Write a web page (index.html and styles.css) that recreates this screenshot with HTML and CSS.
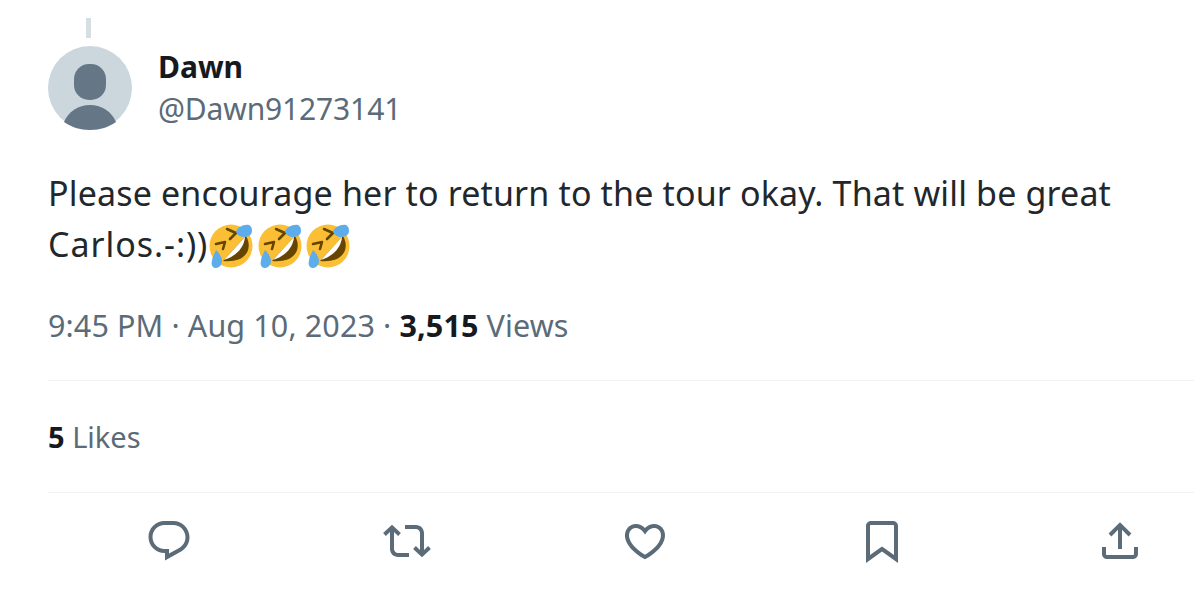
FILE: index.html
```html
<!DOCTYPE html>
<html lang="en">
<head>
  <meta charset="UTF-8">
  <title>Dawn on X</title>
  <link rel="stylesheet" href="styles.css">
</head>
<body>
  <svg class="defs" width="0" height="0">
    <symbol id="rofl" viewBox="0 0 44 44">
      <circle cx="22" cy="22" r="21.5" fill="#fbbf35"/>
      <path d="M37 12 C44 24 38 39 14 37z" fill="#664500"/>
      <path d="M36 13 C35 24 27 32 15 36z" fill="#fff"/>
      <path d="M18 5 L27 9 L21 15" fill="none" stroke="#664500" stroke-width="2.6" stroke-linecap="round" stroke-linejoin="round"/>
      <path d="M7 20 L16 18 L14 25" fill="none" stroke="#664500" stroke-width="2.6" stroke-linecap="round" stroke-linejoin="round"/>
      <path d="M27 8 C28 3 35 0 40 1 C44 3 44 10 40 12 C35 14 29 13 27 8z" fill="#5dadec"/>
      <path d="M7 26 C10 29 13 33 13 37 C13 41 10 44 7 44 C3 44 2 40 3 37 C3 33 6 29 7 26z" fill="#5dadec"/>
    </symbol>
  </svg>

  <div class="thread-line"></div>

  <header class="author">
    <svg class="avatar" viewBox="0 0 84 84">
      <circle cx="42" cy="42" r="42" fill="#ccd6dd"/>
      <rect x="26" y="18" width="32" height="36" rx="15" fill="#657786"/>
      <path d="M16 76 C20 66 30 59 42 59 C54 59 64 66 68 76 C61 81 52 84 42 84 C32 84 23 81 16 76z" fill="#657786"/>
    </svg>
    <div class="names">
      <div class="name">Dawn</div>
      <div class="handle">@Dawn91273141</div>
    </div>
  </header>

  <p class="tweet-text">Please encourage her to return to the tour okay. That will be great <span class="wide">Carlos.-:))</span><svg class="emoji"><use href="#rofl"/></svg><svg class="emoji"><use href="#rofl"/></svg><svg class="emoji"><use href="#rofl"/></svg></p>

  <div class="meta">9:45 PM · Aug 10, 2023 · <b>3,515</b> Views</div>

  <div class="likes"><b>5</b> Likes</div>

  <div class="actions">
    <svg class="icon" viewBox="0 0 24 24"><path d="M1.751 10c0-4.42 3.584-8 8.005-8h4.366c4.49 0 8.129 3.64 8.129 8.13 0 2.96-1.607 5.68-4.196 7.11l-8.054 4.46v-3.69h-.067c-4.49.1-8.183-3.51-8.183-8.01zm8.005-6c-3.317 0-6.005 2.69-6.005 6 0 3.37 2.77 6.08 6.138 6.01l.351-.01h1.761v2.3l5.087-2.81c1.951-1.08 3.163-3.13 3.163-5.36 0-3.39-2.744-6.13-6.129-6.13H9.756z"/></svg>
    <svg class="icon" viewBox="0 0 24 24"><path d="M4.5 3.88l4.432 4.14-1.364 1.46L5.5 7.55V16c0 1.1.896 2 2 2H13v2H7.5c-2.209 0-4-1.79-4-4V7.55L1.432 9.48.068 8.02 4.5 3.88zM16.5 6H11V4h5.5c2.209 0 4 1.79 4 4v8.45l2.068-1.93 1.364 1.46-4.432 4.14-4.432-4.14 1.364-1.46 2.068 1.93V8c0-1.1-.896-2-2-2z"/></svg>
    <svg class="icon" viewBox="0 0 24 24"><path d="M16.697 5.5c-1.222-.06-2.679.51-3.89 2.16l-.805 1.09-.806-1.09C9.984 6.01 8.526 5.44 7.304 5.5c-1.243.07-2.349.78-2.91 1.91-.552 1.12-.633 2.78.479 4.82 1.074 1.97 3.257 4.27 7.129 6.61 3.87-2.34 6.052-4.64 7.126-6.61 1.111-2.04 1.03-3.7.477-4.82-.561-1.13-1.666-1.84-2.908-1.91zm4.187 7.69c-1.351 2.48-4.001 5.12-8.379 7.67l-.503.3-.504-.3c-4.379-2.55-7.029-5.19-8.382-7.67-1.36-2.5-1.41-4.86-.514-6.67.887-1.79 2.647-2.91 4.601-3.01 1.651-.09 3.368.56 4.798 2.01 1.429-1.45 3.146-2.1 4.796-2.01 1.954.1 3.714 1.22 4.601 3.01.896 1.81.846 4.17-.514 6.67z"/></svg>
    <svg class="icon" viewBox="0 0 24 24"><path d="M4 4.5C4 3.12 5.119 2 6.5 2h11C18.881 2 20 3.12 20 4.5v18.44l-8-5.71-8 5.71V4.5zM6.5 4c-.276 0-.5.22-.5.5v14.56l6-4.29 6 4.29V4.5c0-.28-.224-.5-.5-.5h-11z"/></svg>
    <svg class="icon" viewBox="0 0 24 24"><path d="M12 2.59l5.7 5.7-1.41 1.42L13 6.41V16h-2V6.41l-3.3 3.3-1.41-1.42L12 2.59zM21 15l-.02 3.51c0 1.38-1.12 2.49-2.5 2.49H5.5C4.11 21 3 19.88 3 18.5V15h2v3.5c0 .28.22.5.5.5h12.98c.28 0 .5-.22.5-.5L19 15h2z"/></svg>
  </div>
</body>
</html>
```

FILE: styles.css
```css
*{
  margin: 0;
  padding: 0;
  box-sizing: border-box;
}
html, body{
  height: 600px;
  overflow: hidden;
}
body{
  background: #ffffff;
  color: #0f1419;
  font-family: "Noto Sans", "Liberation Sans", sans-serif;
  padding: 18px 6px 0 48px;
}
.defs{
  display: block;
  height: 0;
}
.thread-line{
  width: 5px;
  height: 20px;
  margin-left: 38px;
  background: #d5dee2;
}
.author{
  display: flex;
  align-items: center;
  margin-top: 8px;
  height: 84px;
}
.avatar{
  width: 84px;
  height: 84px;
  flex: none;
}
.names{
  margin-left: 26px;
}
.name{
  font-size: 30px;
  font-weight: 700;
  line-height: 42px;
  color: #16191d;
}
.handle{
  font-size: 30px;
  letter-spacing: -0.15px;
  line-height: 42px;
  color: #5b6b78;
}
.tweet-text{
  margin-top: 38px;
  font-size: 34px;
  letter-spacing: 0.15px;
  line-height: 51px;
  color: #22272b;
}
.wide{
  letter-spacing: 0.95px;
}
.emoji{
  width: 44px;
  height: 44px;
  margin-left: 1px;
  margin-right: 3.5px;
  vertical-align: -11px;
}
.meta{
  margin-top: 36px;
  font-size: 30.5px;
  letter-spacing: 0.12px;
  line-height: 38px;
  color: #5b6b78;
  padding-bottom: 36px;
  border-bottom: 1px solid #eff3f4;
}
.meta b, .likes b{
  color: #16191d;
  font-weight: 700;
}
.likes{
  height: 112px;
  font-size: 29px;
  line-height: 112px;
  color: #5b6b78;
  border-bottom: 1px solid #eff3f4;
}
.actions{
  display: flex;
  justify-content: space-between;
  padding: 24px 50px 0 97px;
}
.icon{
  width: 48px;
  height: 48px;
  fill: #5b6b78;
}
```
